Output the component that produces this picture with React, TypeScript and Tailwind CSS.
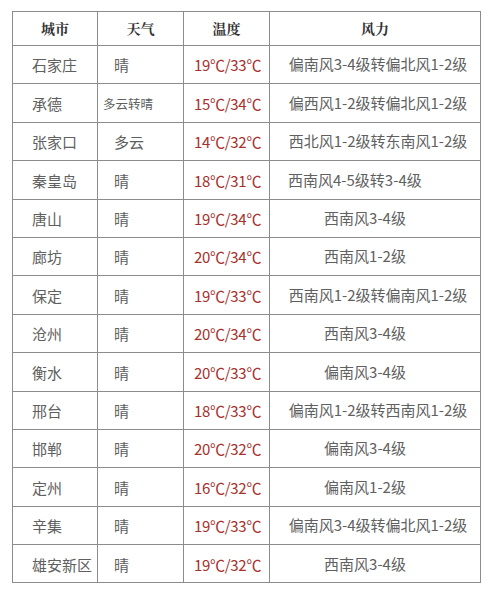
type Row = { city: string; weather: string; temp: string; wind: string; align: "long" | "short" | "left" };

const rows: Row[] = [
  { city: "石家庄", weather: "晴", temp: "19℃/33℃", wind: "偏南风3-4级转偏北风1-2级", align: "long" },
  { city: "承德", weather: "多云转晴", temp: "15℃/34℃", wind: "偏西风1-2级转偏北风1-2级", align: "long" },
  { city: "张家口", weather: "多云", temp: "14℃/32℃", wind: "西北风1-2级转东南风1-2级", align: "long" },
  { city: "秦皇岛", weather: "晴", temp: "18℃/31℃", wind: "西南风4-5级转3-4级", align: "left" },
  { city: "唐山", weather: "晴", temp: "19℃/34℃", wind: "西南风3-4级", align: "short" },
  { city: "廊坊", weather: "晴", temp: "20℃/34℃", wind: "西南风1-2级", align: "short" },
  { city: "保定", weather: "晴", temp: "19℃/33℃", wind: "西南风1-2级转偏南风1-2级", align: "long" },
  { city: "沧州", weather: "晴", temp: "20℃/34℃", wind: "西南风3-4级", align: "short" },
  { city: "衡水", weather: "晴", temp: "20℃/33℃", wind: "偏南风3-4级", align: "short" },
  { city: "邢台", weather: "晴", temp: "18℃/33℃", wind: "偏南风1-2级转西南风1-2级", align: "long" },
  { city: "邯郸", weather: "晴", temp: "20℃/32℃", wind: "偏南风3-4级", align: "short" },
  { city: "定州", weather: "晴", temp: "16℃/32℃", wind: "偏南风1-2级", align: "short" },
  { city: "辛集", weather: "晴", temp: "19℃/33℃", wind: "偏南风3-4级转偏北风1-2级", align: "long" },
  { city: "雄安新区", weather: "晴", temp: "19℃/32℃", wind: "西南风3-4级", align: "short" },
];

const windClass: Record<Row["align"], string> = {
  long: "border border-[#8c8c8c] text-center pl-[6px] whitespace-nowrap",
  short: "border border-[#8c8c8c] text-center pr-[20px] whitespace-nowrap",
  left: "border border-[#8c8c8c] text-left pl-[18px] whitespace-nowrap",
};

export default function App() {
  return (
    <div className="w-[490px] h-[600px] bg-white pt-[11px] pl-[12px] font-['Noto_Sans_CJK_SC',sans-serif]">
      <table className="table-fixed border-collapse w-[469px] border border-[#8c8c8c]">
        <colgroup>
          <col className="w-[85px]" />
          <col className="w-[86px]" />
          <col className="w-[86px]" />
          <col />
        </colgroup>
        <thead>
          <tr className="h-[34px] text-[14px] font-bold text-[#333] font-['Noto_Serif_CJK_SC','Noto_Sans_CJK_SC',serif]">
            <th className="border border-[#8c8c8c] text-center">城市</th>
            <th className="border border-[#8c8c8c] text-center">天气</th>
            <th className="border border-[#8c8c8c] text-center">温度</th>
            <th className="border border-[#8c8c8c] text-center">风力</th>
          </tr>
        </thead>
        <tbody>
          {rows.map((r) => (
            <tr key={r.city} className="h-[38.4px] text-[15px] text-[#606060]">
              <td className="border border-[#8c8c8c] pl-[19px] pt-[2px] whitespace-nowrap">{r.city}</td>
              <td
                className={
                  r.weather.length > 2
                    ? "border border-[#8c8c8c] pl-[5px] pt-[2px] text-[12.5px] whitespace-nowrap"
                    : "border border-[#8c8c8c] pl-[16px] pt-[2px] whitespace-nowrap"
                }
              >
                {r.weather}
              </td>
              <td className="border border-[#8c8c8c] pl-[10px] pt-[2px] text-[#a8302c] whitespace-nowrap tracking-[-0.3px]">
                {r.temp}
              </td>
              <td className={windClass[r.align]}>{r.wind}</td>
            </tr>
          ))}
        </tbody>
      </table>
    </div>
  );
}
